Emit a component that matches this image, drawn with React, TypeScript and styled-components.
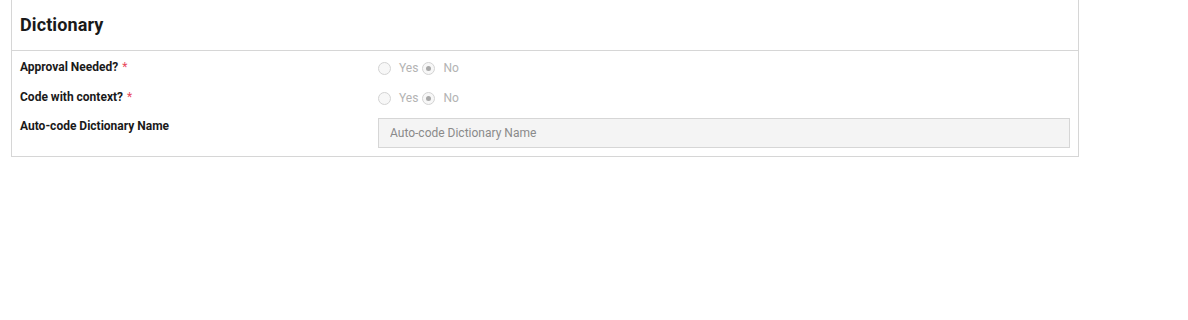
import React from "react";
import styled, { createGlobalStyle } from "styled-components";

const Global = createGlobalStyle`
  html, body { margin: 0; padding: 0; background: #fff; }
  body { font-family: Roboto, "Liberation Sans", Arial, sans-serif; color: #1a1a1a; }
`;

const Panel = styled.section`
  margin-left: 11px;
  width: 1068px;
  box-sizing: border-box;
  border: 1px solid #d6d6d6;
  border-top: none;
  background: #fff;
`;

const Header = styled.div`
  height: 51px;
  box-sizing: border-box;
  display: flex;
  align-items: center;
  padding: 0 8px 2px 8px;
  border-bottom: 1px solid #d6d6d6;
`;

const Title = styled.h2`
  margin: 0;
  font-size: 18px;
  font-weight: 700;
  color: #1a1a1a;
  letter-spacing: 0.1px;
`;

const Body = styled.div`
  padding: 2px 8px 8px 8px;
  display: flex;
  flex-direction: column;
`;

const Row = styled.div<{ $tall?: boolean }>`
  display: grid;
  grid-template-columns: 358px 1fr;
  align-items: ${(p) => (p.$tall ? "start" : "center")};
  min-height: 30px;
  margin-top: ${(p) => (p.$tall ? 5 : 0)}px;
`;

const Label = styled.label<{ $offset?: number }>`
  font-size: 12px;
  font-weight: 700;
  color: #1a1a1a;
  line-height: 16px;
  padding-top: ${(p) => p.$offset ?? 0}px;
  margin-top: -3px;
`;

const Required = styled.span`
  color: #e8495c;
  margin-left: 4px;
  font-weight: 400;
`;

const RadioGroup = styled.div`
  display: flex;
  align-items: center;
`;

const RadioOption = styled.span`
  display: inline-flex;
  align-items: center;
  font-size: 12px;
  color: #b3b3b3;
  margin-right: 4px;
`;

const Circle = styled.span<{ $checked?: boolean }>`
  width: 13px;
  height: 13px;
  box-sizing: border-box;
  border: 1px solid #d3d3d3;
  border-radius: 50%;
  background: #f7f7f7;
  display: inline-flex;
  align-items: center;
  justify-content: center;
  margin-right: 8px;
  &::after {
    content: "";
    width: 5px;
    height: 5px;
    border-radius: 50%;
    background: ${(p) => (p.$checked ? "#a8a8a8" : "transparent")};
  }
`;

const Input = styled.input`
  box-sizing: border-box;
  width: 100%;
  height: 30px;
  border: 1px solid #d6d6d6;
  background: #f4f4f4;
  padding: 0 11px;
  font-family: Roboto, "Liberation Sans", Arial, sans-serif;
  font-size: 12px;
  color: #8a8a8a;
  outline: none;
  &::placeholder { color: #8a8a8a; }
`;

const YesNo: React.FC<{ value: "yes" | "no" }> = ({ value }) => (
  <RadioGroup>
    <RadioOption>
      <Circle $checked={value === "yes"} />
      Yes
    </RadioOption>
    <RadioOption>
      <Circle $checked={value === "no"} />
      No
    </RadioOption>
  </RadioGroup>
);

export default function App() {
  return (
    <>
      <Global />
      <Panel>
        <Header>
          <Title>Dictionary</Title>
        </Header>
        <Body>
          <Row>
            <Label>
              Approval Needed?<Required>*</Required>
            </Label>
            <YesNo value="no" />
          </Row>
          <Row>
            <Label>
              Code with context?<Required>*</Required>
            </Label>
            <YesNo value="no" />
          </Row>
          <Row $tall>
            <Label $offset={3}>Auto-code Dictionary Name</Label>
            <Input disabled placeholder="Auto-code Dictionary Name" />
          </Row>
        </Body>
      </Panel>
    </>
  );
}
